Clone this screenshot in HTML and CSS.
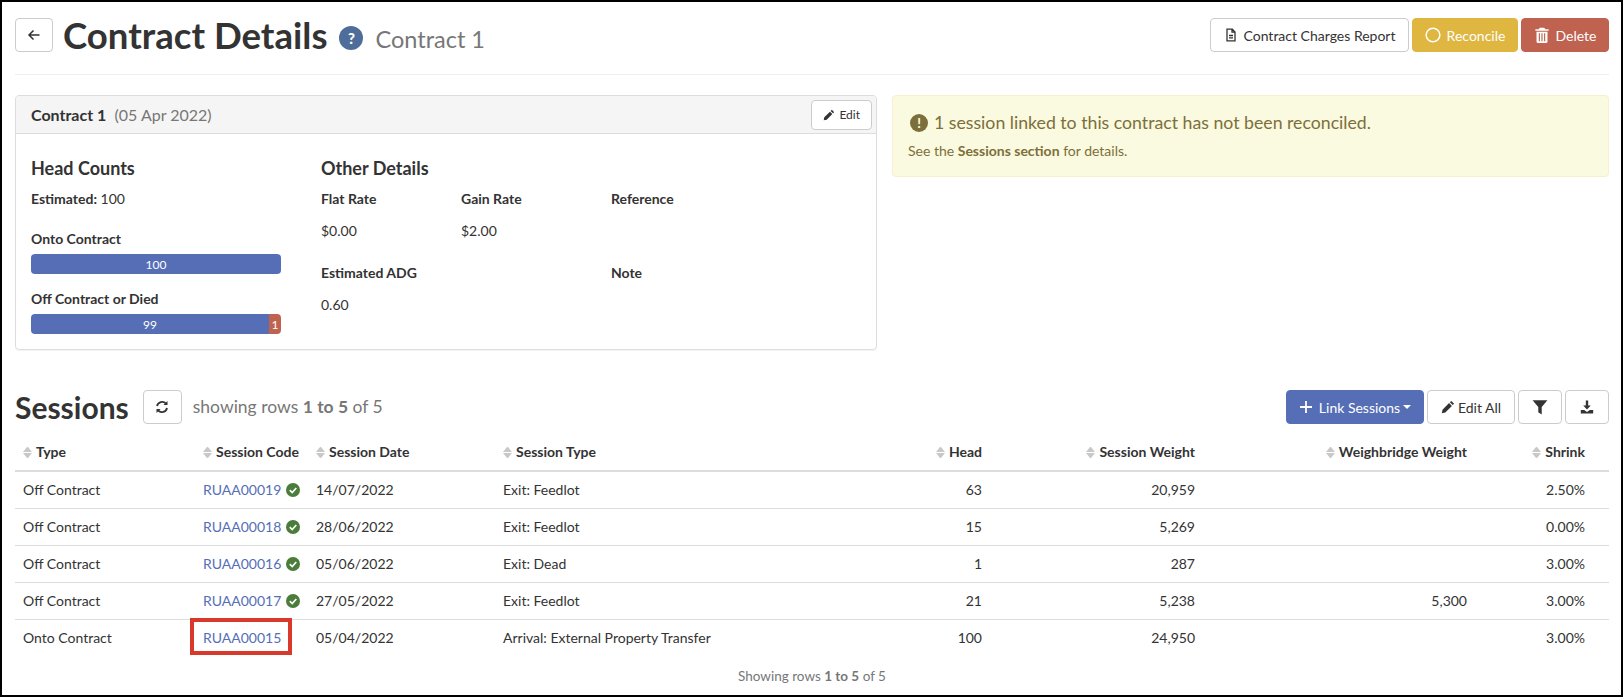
FILE: index.html
```html
<!DOCTYPE html>
<html lang="en">
<head>
    <meta charset="UTF-8">
    <meta name="viewport" content="width=device-width, initial-scale=1.0">
    <title>Contract Details</title>
    <link rel="stylesheet" href="styles.css">
</head>
<body>
    <div class="page">
        <!-- Page header -->
        <header class="page-header">
            <button class="btn btn-back" aria-label="Back">
                <svg class="icon" viewBox="0 0 14 14" fill="none" stroke="currentColor" stroke-width="1.5"><path d="M12.500 7H2M6.500 2.500 2 7l4.500 4.500"/></svg>
            </button>
            <h1 class="page-title">Contract Details</h1>
            <span class="help-badge">?</span>
            <span class="page-subtitle">Contract 1</span>
            <div class="header-actions">
                <button class="btn btn-report">
                    <svg class="icon" viewBox="0 0 14 14" fill="none" stroke="currentColor" stroke-width="1.300"><path d="M3 1.200h5.300L11 4v8.800H3zM8 1.200v3h3M5 7.500h4M5 9.800h4"/></svg>
                    Contract Charges Report
                </button>
                <button class="btn btn-gold btn-reconcile">
                    <svg class="icon icon-lg" viewBox="0 0 14 14" fill="none" stroke="currentColor" stroke-width="1.300"><circle cx="7" cy="7" r="6"/></svg>
                    Reconcile
                </button>
                <button class="btn btn-red btn-delete">
                    <svg class="icon icon-lg" viewBox="0 0 14 14" fill="currentColor"><path d="M5 .6h4l.8 1.400h3v1.300H1.200V2h3zM2.200 4.200h9.600V13a1 1 0 0 1-1 1H3.200a1 1 0 0 1-1-1zM4.200 5.500v7h1v-7zM6.500 5.500v7h1v-7zM8.800 5.500v7h1v-7z" fill-rule="evenodd"/></svg>
                    Delete
                </button>
            </div>
        </header>

        <div class="summary-row">
            <!-- Contract panel -->
            <section class="panel">
                <div class="panel-heading">
                    <div><strong>Contract 1</strong> <span class="muted">&nbsp;(05 Apr 2022)</span></div>
                    <button class="btn btn-sm">
                        <svg class="icon icon-sm" viewBox="0 0 14 14" fill="currentColor"><path d="M10.300.9 13.100 3.700 11.700 5.100 8.900 2.300zM8.100 3.100 10.900 5.900 4.300 12.500.8 13.200 1.500 9.700z"/></svg>
                        Edit
                    </button>
                </div>
                <div class="panel-body">
                    <div class="head-counts">
                        <h3>Head Counts</h3>
                        <p class="estimated"><strong>Estimated:</strong> 100</p>
                        <p class="bar-label"><strong>Onto Contract</strong></p>
                        <div class="bar">
                            <div class="bar-seg bar-blue" style="width: 100%">100</div>
                        </div>
                        <p class="bar-label"><strong>Off Contract or Died</strong></p>
                        <div class="bar">
                            <div class="bar-seg bar-blue" style="width: 95.2%">99</div>
                            <div class="bar-seg bar-red" style="width: 4.800%">1</div>
                        </div>
                    </div>
                    <div class="other-details">
                        <h3>Other Details</h3>
                        <div class="detail-grid">
                            <div class="detail"><strong>Flat Rate</strong><span>$0.00</span></div>
                            <div class="detail"><strong>Gain Rate</strong><span>$2.00</span></div>
                            <div class="detail"><strong>Reference</strong></div>
                            <div class="detail detail-wide"><strong>Estimated ADG</strong><span>0.60</span></div>
                            <div class="detail"><strong>Note</strong></div>
                        </div>
                    </div>
                </div>
            </section>

            <!-- Warning -->
            <section class="alert">
                <div class="alert-title"><span class="alert-badge">!</span> 1 session linked to this contract has not been reconciled.</div>
                <p>See the <strong>Sessions section</strong> for details.</p>
            </section>
        </div>

        <!-- Sessions -->
        <div class="sessions-bar">
            <h2 class="sessions-title">Sessions</h2>
            <button class="btn btn-refresh" aria-label="Refresh">
                <svg class="icon" viewBox="0 0 14 14" fill="none" stroke="currentColor" stroke-width="1.800"><path d="M2 6a5.200 5.200 0 0 1 9-2.400M12 8a5.200 5.200 0 0 1-9 2.400"/><path d="M12.500 1v4h-4zM1.500 13V9h4z" fill="currentColor" stroke="none"/></svg>
            </button>
            <span class="showing">showing rows <strong>1 to 5</strong> of 5</span>
            <div class="sessions-actions">
                <button class="btn btn-primary btn-link-sessions">
                    <svg class="icon" viewBox="0 0 14 14" fill="none" stroke="currentColor" stroke-width="1.800"><path d="M7 1v12M1 7h12"/></svg>
                    Link Sessions <span class="caret"></span>
                </button>
                <button class="btn btn-edit-all">
                    <svg class="icon" viewBox="0 0 14 14" fill="currentColor"><path d="M10.300.9 13.100 3.700 11.700 5.100 8.900 2.300zM8.100 3.100 10.900 5.900 4.300 12.500.8 13.200 1.500 9.700z"/></svg>
                    Edit All
                </button>
                <button class="btn btn-icon" aria-label="Filter">
                    <svg class="icon icon-lg" viewBox="0 0 14 14" fill="currentColor"><path d="M.5 1h13L8.500 7v6.500l-3-2V7z"/></svg>
                </button>
                <button class="btn btn-icon" aria-label="Download">
                    <svg class="icon" viewBox="0 0 14 14" fill="currentColor"><path d="M5.800.5h2.400v5h2.600L7 9.500l-3.800-4h2.600zM.8 10h3.400L7 12l2.800-2h3.400v3.500H.8z"/></svg>
                </button>
            </div>
        </div>

        <table class="sessions-table">
            <colgroup>
                <col class="col-type"><col class="col-code"><col class="col-date"><col class="col-kind">
                <col class="col-head"><col class="col-weight"><col class="col-bridge"><col class="col-shrink">
            </colgroup>
            <thead>
                <tr>
                    <th><span class="sort"></span>Type</th>
                    <th><span class="sort"></span>Session Code</th>
                    <th><span class="sort"></span>Session Date</th>
                    <th><span class="sort"></span>Session Type</th>
                    <th class="num"><span class="sort"></span>Head</th>
                    <th class="num"><span class="sort"></span>Session Weight</th>
                    <th class="num"><span class="sort"></span>Weighbridge Weight</th>
                    <th class="num"><span class="sort"></span>Shrink</th>
                </tr>
            </thead>
            <tbody>
                <tr>
                    <td>Off Contract</td>
                    <td><a href="#">RUAA00019</a> <span class="check"><svg viewBox="0 0 14 14" fill="none" stroke="currentColor" stroke-width="1.700"><path d="M3.800 7.200 6.200 9.500 10.300 5"/></svg></span></td>
                    <td>14/07/2022</td><td>Exit: Feedlot</td><td class="num">63</td><td class="num">20,959</td><td class="num"></td><td class="num">2.50%</td>
                </tr>
                <tr>
                    <td>Off Contract</td>
                    <td><a href="#">RUAA00018</a> <span class="check"><svg viewBox="0 0 14 14" fill="none" stroke="currentColor" stroke-width="1.700"><path d="M3.800 7.200 6.200 9.500 10.300 5"/></svg></span></td>
                    <td>28/06/2022</td><td>Exit: Feedlot</td><td class="num">15</td><td class="num">5,269</td><td class="num"></td><td class="num">0.00%</td>
                </tr>
                <tr>
                    <td>Off Contract</td>
                    <td><a href="#">RUAA00016</a> <span class="check"><svg viewBox="0 0 14 14" fill="none" stroke="currentColor" stroke-width="1.700"><path d="M3.800 7.200 6.200 9.500 10.300 5"/></svg></span></td>
                    <td>05/06/2022</td><td>Exit: Dead</td><td class="num">1</td><td class="num">287</td><td class="num"></td><td class="num">3.00%</td>
                </tr>
                <tr>
                    <td>Off Contract</td>
                    <td><a href="#">RUAA00017</a> <span class="check"><svg viewBox="0 0 14 14" fill="none" stroke="currentColor" stroke-width="1.700"><path d="M3.800 7.200 6.200 9.500 10.300 5"/></svg></span></td>
                    <td>27/05/2022</td><td>Exit: Feedlot</td><td class="num">21</td><td class="num">5,238</td><td class="num">5,300</td><td class="num">3.00%</td>
                </tr>
                <tr>
                    <td>Onto Contract</td>
                    <td class="marked"><a href="#">RUAA00015</a><span class="red-box"></span></td>
                    <td>05/04/2022</td><td>Arrival: External Property Transfer</td><td class="num">100</td><td class="num">24,950</td><td class="num"></td><td class="num">3.00%</td>
                </tr>
            </tbody>
        </table>

        <div class="table-footer">Showing rows <strong>1 to 5</strong> of 5</div>
    </div>
</body>
</html>
```

FILE: styles.css
```css
* {
    margin: 0;
    padding: 0;
    box-sizing: border-box;
}

body {
    font-family: "Lato", "Liberation Sans", sans-serif;
    font-size: 14px;
    line-height: 20px;
    color: #333;
    background: #fff;
}

.page {
    height: 697px;
    overflow: hidden;
    border: 2px solid #000;
    padding: 16px 12px 0 13px;
}

/* Buttons */
.btn {
    display: inline-flex;
    align-items: center;
    justify-content: center;
    gap: 6px;
    height: 34px;
    padding: 0 12px;
    font-family: inherit;
    font-size: 14px;
    color: #333;
    background: #fff;
    border: 1px solid #ccc;
    border-radius: 4px;
}

.btn-gold {
    color: #fff;
    background: #deb640;
    border-color: #deb640;
}

.btn-red {
    color: #fff;
    background: #bf6350;
    border-color: #bf6350;
}

.btn-primary {
    color: #fff;
    background: #556eb6;
    border-color: #556eb6;
}

.btn-sm {
    height: 30px;
    padding: 0 11px;
    font-size: 12px;
    gap: 4px;
}

.btn-back {
    width: 38px;
    padding: 0;
}

.btn-refresh {
    width: 39px;
    padding: 0;
}

.btn-icon {
    width: 44px;
    padding: 0;
}

.btn-report {
    width: 199px;
    padding: 0;
}

.btn-reconcile {
    width: 106px;
    padding: 0;
}

.btn-delete {
    width: 88px;
    padding: 0;
}

.icon {
    width: 14px;
    height: 14px;
    flex: none;
}

.icon-sm {
    width: 12px;
    height: 12px;
}

.icon-lg {
    width: 16px;
    height: 16px;
}

/* Page header */
.page-header {
    display: flex;
    align-items: center;
    height: 34px;
    margin-bottom: 22px;
    position: relative;
}

.page-header::after {
    content: '';
    position: absolute;
    left: 0;
    right: 0;
    bottom: -23px;
    border-bottom: 1px solid #eee;
}

.page-title {
    font-size: 36.6px;
    line-height: 40px;
    font-weight: 700;
    margin-left: 10px;
}

.help-badge {
    width: 24px;
    height: 24px;
    margin: 6px 0 0 12px;
    border-radius: 50%;
    background: #4f6d9a;
    color: #fff;
    font-size: 15px;
    font-weight: 900;
    line-height: 24px;
    text-align: center;
}

.page-subtitle {
    font-size: 23.5px;
    color: #777;
    margin: 8px 0 0 12px;
}

.header-actions {
    display: flex;
    gap: 3px;
    margin-left: auto;
}

/* Summary row */
.summary-row {
    display: grid;
    grid-template-columns: 862px 717px;
    column-gap: 15px;
    align-items: start;
    margin-top: 43px;
}

.panel {
    height: 255px;
    border: 1px solid #ddd;
    border-radius: 4px;
    box-shadow: 0 1px 1px rgba(0, 0, 0, 0.05);
}

.panel-heading {
    display: flex;
    align-items: center;
    justify-content: space-between;
    height: 38px;
    padding: 0 4px 0 15px;
    font-size: 16px;
    background: #f5f5f5;
    border-bottom: 1px solid #ddd;
    border-radius: 3px 3px 0 0;
}

.muted {
    color: #777;
}

.panel-body {
    display: flex;
    padding: 24px 15px 0;
}

.panel-body h3 {
    font-size: 18px;
    line-height: 20px;
    font-weight: 700;
}

.head-counts {
    width: 250px;
    margin-right: 40px;
}

.estimated {
    margin-top: 11px;
}

.bar-label {
    margin: 20px 0 5px;
}

.bar-label + .bar + .bar-label {
    margin-top: 15px;
}

.bar {
    display: flex;
    height: 20px;
    border-radius: 4px;
    overflow: hidden;
}

.bar-seg {
    font-size: 12px;
    line-height: 21px;
    text-align: center;
    color: #fff;
}

.bar-blue {
    background: #556eb6;
}

.bar-red {
    background: #bf6350;
}

.other-details {
    flex: 1;
}

.detail-grid {
    display: grid;
    grid-template-columns: 140px 150px 1fr;
    grid-template-rows: 74px 60px;
    margin-top: 11px;
}

.detail strong {
    display: block;
    margin-bottom: 12px;
}

.detail-wide {
    grid-column: span 2;
}

/* Warning */
.alert {
    height: 82px;
    padding: 15px 15px;
    background: #fafae0;
    border: 1px solid #f6f1cc;
    border-radius: 4px;
    color: #7d6f3a;
    font-size: 14px;
}

.alert-title {
    display: flex;
    align-items: center;
    gap: 6px;
    padding-left: 2px;
    font-size: 17.7px;
    line-height: 24px;
    margin-bottom: 6px;
}

.alert-badge {
    width: 18px;
    height: 18px;
    border-radius: 50%;
    background: #7d6f3a;
    color: #fafae0;
    font-size: 13px;
    font-weight: 900;
    line-height: 18px;
    text-align: center;
}

/* Sessions */
.sessions-bar {
    display: flex;
    align-items: center;
    height: 34px;
    margin-top: 40px;
    margin-bottom: 10px;
}

.sessions-title {
    font-size: 30px;
    line-height: 34px;
    font-weight: 700;
    margin-right: 14px;
}

.showing {
    font-size: 17.5px;
    color: #777;
    margin-left: 11px;
}

.sessions-actions {
    display: flex;
    gap: 3px;
    margin-left: auto;
}

.btn-link-sessions {
    width: 138px;
    padding: 0;
}

.btn-edit-all {
    width: 88px;
    padding: 0;
    gap: 3px;
}

.caret {
    display: inline-block;
    margin-left: -3px;
    border-top: 4px solid currentColor;
    border-left: 4px solid transparent;
    border-right: 4px solid transparent;
}

.sessions-table {
    width: 100%;
    table-layout: fixed;
    border-collapse: collapse;
}

.col-type { width: 180px; }
.col-code { width: 113px; }
.col-date { width: 187px; }
.col-kind { width: 300px; }
.col-head { width: 195px; }
.col-weight { width: 213px; }
.col-bridge { width: 272px; }
.col-shrink { width: 134px; }

.sessions-table th {
    height: 37px;
    padding: 8px;
    text-align: left;
    font-weight: 700;
    white-space: nowrap;
    border-bottom: 2px solid #ddd;
}

.sessions-table td {
    height: 37px;
    padding: 8px;
    white-space: nowrap;
    border-bottom: 1px solid #ddd;
}

.sessions-table tr:last-child td {
    border-bottom: none;
}

.sessions-table th.num,
.sessions-table td.num {
    text-align: right;
}

.sessions-table th:last-child,
.sessions-table td:last-child {
    padding-right: 24px;
}

/* Two stacked triangles for the sortable headers */
.sort {
    display: inline-block;
    vertical-align: -1px;
    margin-right: 4px;
    width: 9px;
    height: 11px;
}

.sort::before,
.sort::after {
    content: '';
    display: block;
    border-left: 4.500px solid transparent;
    border-right: 4.500px solid transparent;
}

.sort::before {
    border-bottom: 5px solid #c8c8c8;
    margin-bottom: 1px;
}

.sort::after {
    border-top: 5px solid #c8c8c8;
}

.sessions-table a {
    color: #556eb6;
    text-decoration: none;
}

.check {
    display: inline-block;
    width: 14px;
    height: 14px;
    margin-left: 1px;
    vertical-align: -2px;
    border-radius: 50%;
    background: #4a7c3a;
    color: #fff;
}

.check svg {
    display: block;
}

.marked {
    position: relative;
}

/* Annotation box drawn over the cell */
.red-box {
    position: absolute;
    left: -5px;
    top: -2px;
    width: 102px;
    height: 37px;
    border: 4px solid #d8392b;
}

.table-footer {
    margin-top: 9px;
    text-align: center;
    font-size: 13.5px;
    color: #777;
}
```
